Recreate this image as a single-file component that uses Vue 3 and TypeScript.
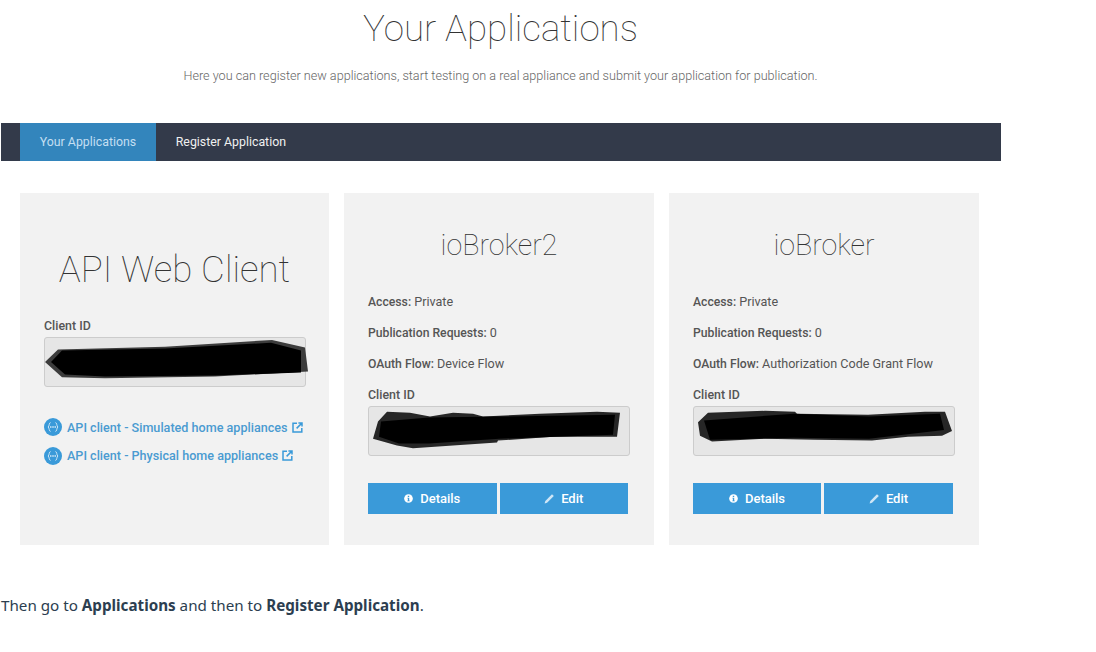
<script setup lang="ts">
interface AppCard {
  name: string
  flow: string
  blot: string
  blot2: string
}

const apps: AppCard[] = [
  {
    name: 'ioBroker2',
    flow: 'Device Flow',
    blot: 'M4 33 L9 15 L18 5 L41 6 L61 10 L84 6 L104 7 L114 10 L171 7 L228 5 L251 6 L248 31 L184 31 L129 35 L128 37 L84 40 L44 43 L28 40 Z',
    blot2: 'M10 31 L12 15 L60 11 L130 10 L246 8 L244 29 L130 33 L60 38 L30 38 Z'
  },
  {
    name: 'ioBroker',
    flow: 'Authorization Code Grant Flow',
    blot: 'M4 16 L14 6 L71 4 L101 5 L103 7 L174 8 L231 5 L251 5 L258 25 L248 30 L214 31 L178 35 L121 34 L71 33 L18 36 L6 30 Z',
    blot2: 'M10 14 L100 7 L175 10 L246 7 L250 24 L175 33 L100 32 L16 34 Z'
  }
]

const links: string[] = [
  'API client - Simulated home appliances',
  'API client - Physical home appliances'
]
</script>

<template>
  <div class="page">
    <section class="panel">
      <header class="head">
        <h1>Your Applications</h1>
        <p>Here you can register new applications, start testing on a real appliance and submit your application for publication.</p>
      </header>

      <nav class="tabs">
        <a class="tab active">Your Applications</a>
        <a class="tab">Register Application</a>
      </nav>

      <div class="cards">
        <article class="card">
          <h2 class="big">API Web Client</h2>
          <div class="label first">Client ID</div>
          <div class="idbox">
            <svg class="blot" viewBox="0 0 262 50" preserveAspectRatio="none">
              <path d="M0 25 L13 12 L120 9 L227 2 L260 10 L263 35 L170 40 L60 42 L17 41 Z" fill="#3c3c3c" />
              <path d="M6 25 L17 13 L120 11 L226 5 L256 13 L256 36 L170 39 L60 40 L20 38 Z" fill="#000" />
            </svg>
          </div>
          <ul class="links">
            <li v-for="text in links" :key="text">
              <svg class="bubble" viewBox="0 0 18 18">
                <circle cx="9" cy="9" r="9" fill="#3a9ad9" />
                <path d="M6.6 4.6 C4.8 4.6 5.6 8 4.1 9 C5.6 10 4.8 13.4 6.6 13.4 M11.4 4.6 C13.2 4.6 12.4 8 13.9 9 C12.4 10 13.2 13.4 11.4 13.4" fill="none" stroke="#cfe6f6" stroke-width="1" />
                <circle cx="6.8" cy="9" r=".8" fill="#fff" />
                <circle cx="9" cy="9" r=".8" fill="#fff" />
                <circle cx="11.2" cy="9" r=".8" fill="#fff" />
              </svg>
              <span>{{ text }}</span>
              <svg class="ext" viewBox="0 0 11 11">
                <path d="M5 1.2 H1 V10 H9.8 V6 M6.4 1 H10 V4.6 M10 1 L4.6 6.4" fill="none" stroke="#3a9ad9" stroke-width="1.5" />
              </svg>
            </li>
          </ul>
        </article>

        <article v-for="app in apps" :key="app.name" class="card">
          <h2 class="small">{{ app.name }}</h2>
          <p class="row"><b>Access:</b> Private</p>
          <p class="row"><b>Publication Requests:</b> 0</p>
          <p class="row"><b>OAuth Flow:</b> {{ app.flow }}</p>
          <div class="label">Client ID</div>
          <div class="idbox">
            <svg class="blot" viewBox="0 0 262 50" preserveAspectRatio="none">
              <path :d="app.blot" fill="#262626" />
              <path :d="app.blot2" fill="#000" />
            </svg>
          </div>
          <div class="actions">
            <button type="button">
              <svg class="ico" viewBox="0 0 10 10">
                <circle cx="5" cy="5" r="4.8" fill="#fff" />
                <path d="M4.2 2 H5.8 V3.4 H4.2 Z M3.8 4.2 H5.8 V7.2 H6.3 V8.1 H3.8 V7.2 H4.3 V5.1 H3.8 Z" fill="#3a9ad9" />
              </svg>
              Details
            </button>
            <button type="button">
              <svg class="ico pen" viewBox="0 0 11 11">
                <path d="M0.6 10.4 L1.3 7.9 L8 1.2 L9.8 3 L3.1 9.7 Z" fill="#cfe6f6" />
              </svg>
              Edit
            </button>
          </div>
        </article>
      </div>
    </section>

    <p class="after">Then go to <strong>Applications</strong> and then to <strong>Register Application</strong>.</p>
  </div>
</template>

<style scoped>
.page {
  width: 1096px;
  height: 652px;
  overflow: hidden;
  background: #fff;
  font-family: Roboto, "Liberation Sans", sans-serif;
}
.panel {
  width: 1001px;
}
.head {
  height: 123px;
  padding-top: 8px;
  box-sizing: border-box;
  text-align: center;
}
.head h1 {
  margin: 0;
  font-size: 36.7px;
  line-height: 42px;
  font-weight: 100;
  color: #333;
}
.head p {
  margin: 18px 0 0;
  font-size: 12.63px;
  line-height: 16px;
  font-weight: 300;
  color: #666;
}
.tabs {
  display: flex;
  height: 38px;
  margin-left: 1px;
  padding-left: 19px;
  background: #333a4a;
}
.tab {
  padding: 0 19.75px;
  font-size: 12.35px;
  line-height: 38px;
  color: #f0f0f0;
}
.tab.active {
  background: #3385bc;
  color: #c4dff2;
}
.cards {
  display: grid;
  grid-template-columns: 309px 310px 310px;
  column-gap: 15px;
  height: 352px;
  margin: 32px 0 0 20px;
}
.card {
  padding: 0 24px;
  background: #f2f2f2;
  color: #555;
  font-size: 12.4px;
}
.big {
  margin: 0;
  padding-top: 56px;
  font-size: 36.7px;
  line-height: 42px;
  font-weight: 100;
  text-align: center;
  color: #333;
}
.small {
  margin: 0 0 34px;
  padding-top: 36px;
  font-size: 28.6px;
  line-height: 32px;
  font-weight: 100;
  text-align: center;
  color: #333;
}
.row {
  margin: 0 0 17px;
  font-size: 12.6px;
  line-height: 14px;
  font-weight: 400;
}
.row b {
  font-size: 12.2px;
  font-weight: 500;
}
.label {
  margin-bottom: 4px;
  font-weight: 500;
  line-height: 14px;
}
.label.first {
  margin-top: 28px;
}
.idbox {
  box-sizing: border-box;
  width: 262px;
  height: 50px;
  background: #e6e6e6;
  border: 1px solid #ccc;
  border-radius: 3px;
}
.blot {
  display: block;
  width: 262px;
  height: 48px;
  overflow: visible;
}
.links {
  margin: 30px 0 0;
  padding: 0;
  list-style: none;
}
.links li {
  display: flex;
  align-items: center;
  height: 20px;
  margin-bottom: 8.5px;
  color: #4a9bd1;
  font-size: 12.6px;
  font-weight: 500;
}
.bubble {
  width: 18px;
  height: 18px;
  margin-right: 5px;
}
.ext {
  width: 11px;
  height: 11px;
  margin-left: 4px;
}
.actions {
  display: flex;
  gap: 3px;
  margin-top: 27px;
  width: 260px;
}
.actions button {
  flex: 1;
  display: flex;
  align-items: center;
  justify-content: center;
  height: 31px;
  padding: 0;
  border: 0;
  background: #3a9ad9;
  color: #fff;
  font-family: Roboto, "Liberation Sans", sans-serif;
  font-size: 13px;
  font-weight: 500;
}
.card:last-child .actions button:first-child {
  flex: 0 0 128px;
}
.ico {
  width: 9px;
  height: 9px;
  margin-right: 7px;
}
.ico.pen {
  width: 11px;
  height: 11px;
  margin-right: 6px;
}
.after {
  margin: 50px 0 0 1px;
  font-family: "Noto Sans", "Open Sans", sans-serif;
  font-size: 15.2px;
  line-height: 20px;
  color: #2c3e50;
}
.after strong {
  font-weight: 700;
}
</style>
